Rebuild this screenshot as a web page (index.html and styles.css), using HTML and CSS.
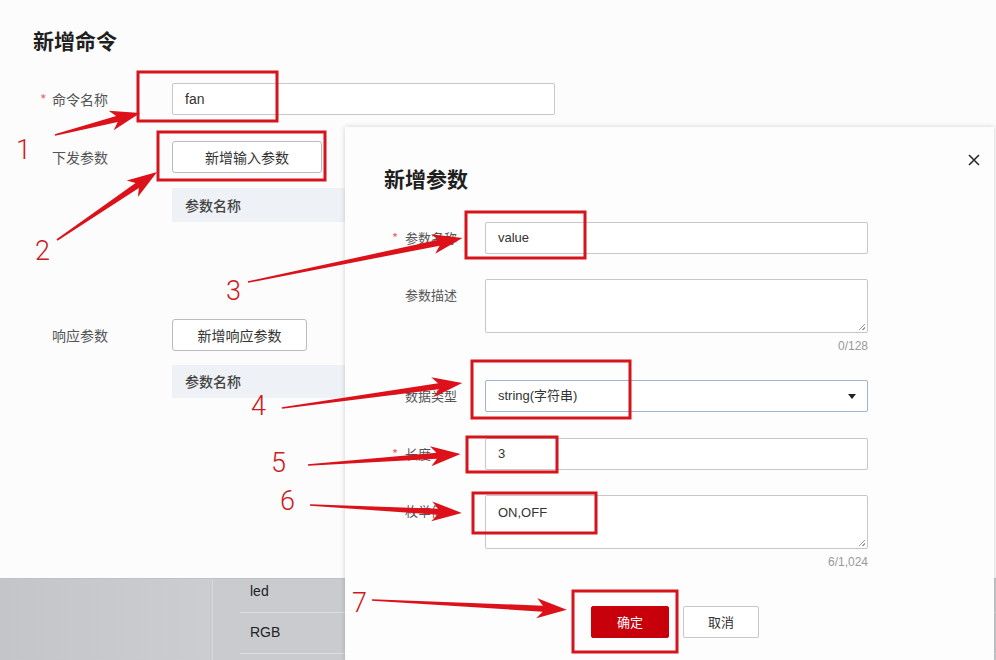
FILE: index.html
```html
<!DOCTYPE html>
<html lang="zh-CN">
<head>
<meta charset="utf-8">
<title>新增命令</title>
<link rel="stylesheet" href="styles.css">
</head>
<body>
<div class="page">
  <div class="main">
    <h1 class="title">新增命令</h1>
    <div class="row r-name">
      <div class="label"><span class="req">*</span>命令名称</div>
      <div class="input w383">fan</div>
    </div>
    <div class="row r-down">
      <div class="label">下发参数</div>
      <div class="field">
        <div class="btn btn-in">新增输入参数</div>
        <div class="thead">参数名称</div>
      </div>
    </div>
    <div class="row r-resp">
      <div class="label">响应参数</div>
      <div class="field">
        <div class="btn btn-resp">新增响应参数</div>
        <div class="thead thead2">参数名称</div>
      </div>
    </div>
  </div>
  <div class="bottom">
    <div class="bcell-left"></div>
    <div class="bcell-right">
      <div class="brow brow1">led</div>
      <div class="brow brow2">RGB</div>
    </div>
  </div>

  <div class="dialog">
    <h2 class="d-title">新增参数</h2>
    <svg class="close" viewBox="0 0 12 12"><path d="M1 1L11 11M11 1L1 11" stroke="#2a2a2a" stroke-width="1.6" fill="none"/></svg>
    <div class="form">
      <div class="frow f1">
        <div class="flabel"><span class="dreq">*</span>参数名称</div>
        <div class="fin">value</div>
      </div>
      <div class="frow f2">
        <div class="flabel">参数描述</div>
        <div class="fin ta"><span class="grip"></span></div>
      </div>
      <div class="counter">0/128</div>
      <div class="frow f3">
        <div class="flabel"><span class="dreq">*</span>数据类型</div>
        <div class="fin sel">string(字符串)<span class="caret"></span></div>
      </div>
      <div class="frow f4">
        <div class="flabel"><span class="dreq">*</span>长度</div>
        <div class="fin">3</div>
      </div>
      <div class="frow f5">
        <div class="flabel">枚举值</div>
        <div class="fin ta ta2">ON,OFF<span class="grip"></span></div>
      </div>
      <div class="counter">6/1,024</div>
      <div class="actions">
        <div class="dbtn ok">确定</div>
        <div class="dbtn cancel">取消</div>
      </div>
    </div>
  </div>

  <svg class="annot" width="996" height="660" viewBox="0 0 996 660">
    <g fill="none" stroke="#d5141c" stroke-width="3">
      <rect x="138" y="72" width="139" height="49"/>
      <rect x="158" y="132" width="167" height="48"/>
      <rect x="466" y="212" width="119" height="46"/>
      <rect x="472" y="361" width="158" height="57"/>
      <rect x="467" y="437" width="90" height="35"/>
      <rect x="473" y="493" width="123" height="40"/>
      <rect x="573" y="591" width="104" height="61"/>
    </g>
    <g fill="#dc1119">
      <g transform="translate(55 135) rotate(-14.5)"><polygon points="0,-0.8 64,-3 58,-10 88,0 58,10 64,3 0,0.8"/></g>
      <g transform="translate(57 240) rotate(-34.2)"><polygon points="0,-0.8 97,-3 91,-10 121,0 91,10 97,3 0,0.8"/></g>
      <g transform="translate(248 282) rotate(-11.6)"><polygon points="0,-0.8 195,-3 189,-10 219,0 189,10 195,3 0,0.8"/></g>
      <g transform="translate(282 408) rotate(-7.9)"><polygon points="0,-0.8 158,-3 152,-10 182,0 152,10 158,3 0,0.8"/></g>
      <g transform="translate(308 465) rotate(-4.1)"><polygon points="0,-0.8 129,-3 123,-10 153,0 123,10 129,3 0,0.8"/></g>
      <g transform="translate(310 505) rotate(3.0)"><polygon points="0,-0.8 128,-3 122,-10 152,0 122,10 128,3 0,0.8"/></g>
      <g transform="translate(372 600) rotate(2.9)"><polygon points="0,-0.8 171,-3 165,-10 195,0 165,10 171,3 0,0.8"/></g>
    </g>
    <g class="num" fill="#cc1a20">
      <text x="16" y="159">1</text>
      <text x="35" y="260">2</text>
      <text x="226" y="300">3</text>
      <text x="251" y="415">4</text>
      <text x="271" y="472">5</text>
      <text x="280" y="510">6</text>
      <text x="352" y="612">7</text>
    </g>
  </svg>
</div>
</body>
</html>
```

FILE: styles.css
```css
* { box-sizing: border-box; margin: 0; padding: 0; }
body { margin: 0; font-family: "Noto Sans CJK SC", "Noto Sans", sans-serif; color: #333; }
.page { position: relative; width: 996px; height: 660px; overflow: hidden; background: #fcfcfd; }

.main { height: 578px; padding: 27px 0 0 33px; }
.title { font-size: 21px; line-height: 26px; font-weight: 700; color: #1f1f1f; }
.row { display: flex; align-items: flex-start; padding-left: 7px; }
.label { width: 132px; padding-left: 12px; font-size: 14px; line-height: 32px; color: #555; }
.req { display: inline-block; width: 12px; margin-left: -12px; color: #e46a6a; }
.r-name { margin-top: 30px; }
.r-down { margin-top: 26px; }
.r-resp { margin-top: 97px; }
.input { height: 32px; border: 1px solid #c5c7cb; border-radius: 2px; background: #fff; font-family: "Liberation Sans", sans-serif; font-size: 14px; line-height: 30px; padding-left: 12px; color: #333; }
.w383 { width: 383px; }
.btn { height: 32px; border: 1px solid #b9bbbf; border-radius: 3px; background: #fff; text-align: center; line-height: 30px; font-size: 14px; color: #333; }
.btn-in { width: 150px; }
.btn-resp { width: 135px; }
.thead { width: 383px; height: 34px; margin-top: 15px; background: #eef1f6; font-size: 14px; line-height: 34px; padding-left: 13px; color: #444; font-weight: 500; }
.thead2 { height: 33px; margin-top: 14px; line-height: 33px; }

.bottom { height: 82px; display: flex; background: #c8cacd; border-top: 1px solid #bfc1c4; }
.bcell-left { width: 213px; background: linear-gradient(90deg, #c3c5c8, #cbcdd0); border-right: 1px solid #d6d8da; }
.bcell-right { flex: 1; padding-left: 27px; background: #c9cbce; }
.brow { font-family: "Liberation Sans", sans-serif; font-size: 14px; color: #222; padding-left: 10px; border-bottom: 1px solid #dcdee0; }
.brow1 { height: 34px; line-height: 24px; }
.brow2 { height: 41px; line-height: 38px; }

.dialog { position: absolute; left: 345px; top: 127px; width: 649px; height: 533px; background: #fdfdfe; box-shadow: 0 0 5px rgba(0,0,0,0.18); }
.d-title { font-size: 21px; font-weight: 700; line-height: 26px; margin: 38px 0 0 39px; color: #1f1f1f; }
.close { position: absolute; top: 27px; right: 14px; width: 12px; height: 12px; }
.form { margin-top: 31px; }
.frow { display: flex; align-items: flex-start; }
.flabel { width: 140px; padding-left: 60px; font-size: 13px; line-height: 32px; color: #555; }
.dreq { display: inline-block; width: 13px; margin-left: -13px; color: #e46a6a; }
.fin { position: relative; width: 383px; height: 32px; border: 1px solid #c5c7cb; border-radius: 2px; background: #fff; font-family: "Liberation Sans", "Noto Sans CJK SC", sans-serif; font-size: 13px; line-height: 30px; padding-left: 12px; color: #333; }
.f2, .f3, .f5 { margin-top: 25px; }
.f4 { margin-top: 26px; }
.ta { height: 54px; }
.ta2 { line-height: 20px; padding-top: 7px; }
.grip { position: absolute; right: 2px; bottom: 2px; width: 6px; height: 6px; background: linear-gradient(135deg, transparent 45%, #999 45%, #999 55%, transparent 55%, transparent 75%, #999 75%, #999 85%, transparent 85%); }
.sel { border-color: #9fb4d2; font-family: "Liberation Sans", "Noto Sans CJK SC", sans-serif; }
.caret { position: absolute; right: 11px; top: 13px; width: 0; height: 0; border-left: 4px solid transparent; border-right: 4px solid transparent; border-top: 5px solid #222; }
.counter { width: 523px; text-align: right; font-family: "Liberation Sans", sans-serif; font-size: 12px; color: #999; line-height: 18px; margin-top: 4px; }
.actions { display: flex; gap: 14px; margin: 35px 0 0 246px; }
.dbtn { height: 32px; border-radius: 2px; text-align: center; font-size: 13px; line-height: 30px; }
.ok { width: 78px; background: #c8000c; border: 1px solid #c8000c; color: #fff; }
.cancel { width: 76px; background: #fff; border: 1px solid #c6c8cc; color: #333; }

.annot { position: absolute; left: 0; top: 0; pointer-events: none; }
.num text { font-family: Roboto, "Liberation Sans", sans-serif; font-weight: 300; font-size: 27px; }
```
